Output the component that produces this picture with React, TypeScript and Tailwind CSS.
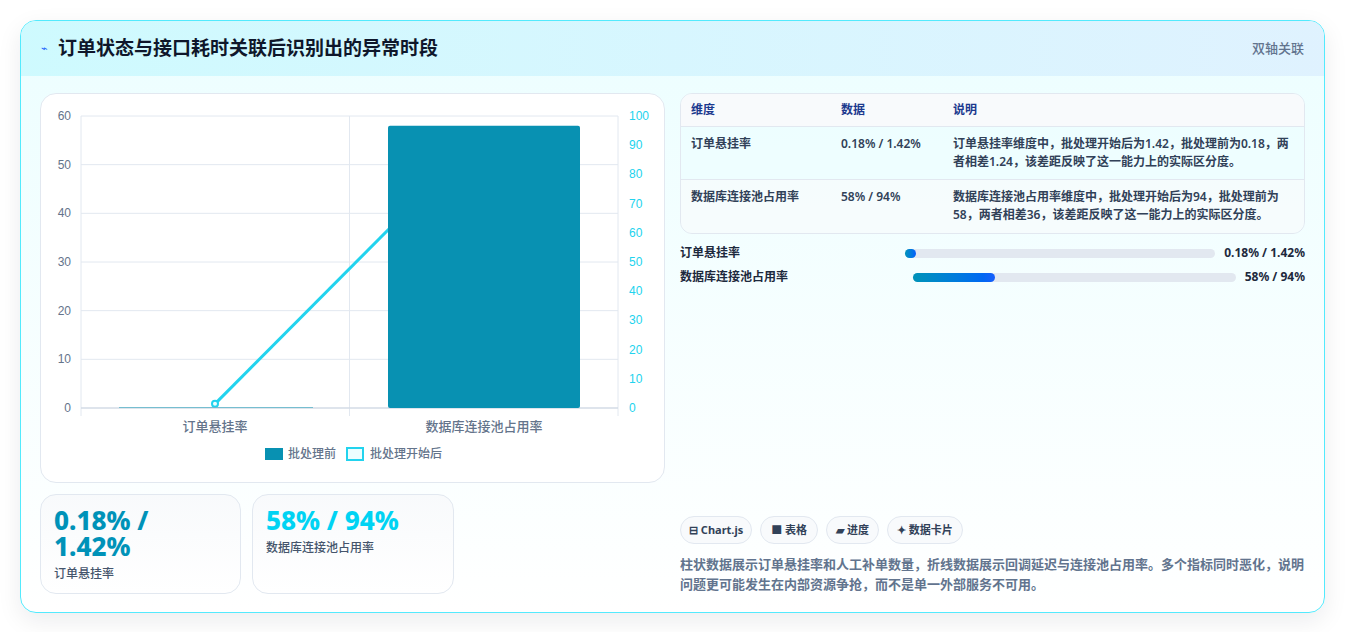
const font = { fontFamily: '"Noto Sans", "Noto Sans CJK SC", sans-serif' };

function Chart() {
  const x0 = 80, x1 = 617, y0 = 115, y1 = 407;
  const h = y1 - y0;
  const left = [0, 10, 20, 30, 40, 50, 60];
  const right = [0, 10, 20, 30, 40, 50, 60, 70, 80, 90, 100];
  const ly = (v: number) => y1 - (v / 60) * h;
  const ry = (v: number) => y1 - (v / 100) * h;
  return (
    <svg width="625" height="388" viewBox="40 93 625 388" className="block">
      {left.map((v) => (
        <g key={v}>
          <line x1={x0} x2={x1} y1={ly(v)} y2={ly(v)} stroke="#e2e8f0" />
          <text x={70} y={ly(v) + 4} textAnchor="end" fontSize="12" fill="#64748b" fontFamily="Liberation Sans, sans-serif">{v}</text>
        </g>
      ))}
      {right.map((v) => (
        <text key={v} x={628} y={ry(v) + 4} fontSize="12" fill="#22d3ee" fontFamily="Liberation Sans, sans-serif">{v}</text>
      ))}
      <line x1={x0} x2={x0} y1={y0} y2={y1 + 8} stroke="#e2e8f0" />
      <line x1={348.5} x2={348.5} y1={y0} y2={y1 + 8} stroke="#e2e8f0" />
      <line x1={x1} x2={x1} y1={y0} y2={y1 + 8} stroke="#e2e8f0" />
      <line x1={x0} x2={x1} y1={y1} y2={y1} stroke="#cbd5e1" />
      <polyline points={`214,${ry(1.42)} 483,${ry(94)}`} fill="none" stroke="#22d3ee" strokeWidth="3" />
      <circle cx={214} cy={ry(1.42)} r="3" fill="#ecfeff" stroke="#22d3ee" strokeWidth="2" />
      <rect x={118} y={ly(0.18)} width={194} height={y1 - ly(0.18)} fill="#67b8cc" />
      <rect x={387} y={ly(58)} width={192} height={y1 - ly(58)} rx="2" fill="#0891b2" />
      <text x={214} y={430} textAnchor="middle" fontSize="13" fontWeight="500" fill="#64748b" style={font}>订单悬挂率</text>
      <text x={483} y={430} textAnchor="middle" fontSize="13" fontWeight="500" fill="#64748b" style={font}>数据库连接池占用率</text>
      <rect x={264} y={447} width={18} height={12} fill="#0891b2" />
      <text x={287} y={457} fontSize="12" fontWeight="500" fill="#64748b" style={font}>批处理前</text>
      <rect x={346} y={447} width={16} height={12} fill="#ecfeff" stroke="#22d3ee" strokeWidth="2" />
      <text x={369} y={457} fontSize="12" fontWeight="500" fill="#64748b" style={font}>批处理开始后</text>
    </svg>
  );
}

export default function App() {
  return (
    <div className="min-h-screen bg-white p-5" style={font}>
      <div className="rounded-2xl border border-cyan-300 bg-gradient-to-b from-cyan-50 to-white overflow-hidden shadow-[0_8px_24px_rgba(15,23,42,0.08)]">
        <div className="flex h-[55px] items-center justify-between bg-gradient-to-r from-cyan-100 to-sky-100 px-5">
          <div className="flex items-center gap-2.5">
            <span className="text-[11px] text-blue-600">⌁</span>
            <h1 className="text-[19px] font-bold text-slate-900">订单状态与接口耗时关联后识别出的异常时段</h1>
          </div>
          <span className="text-[13px] font-medium text-slate-500">双轴关联</span>
        </div>
        <div className="flex gap-[15px] px-[19px] pt-[17px] pb-[18px]">
          <div className="w-[625px] flex flex-col gap-[11px]">
            <div className="rounded-2xl border border-slate-200 bg-white overflow-hidden"><Chart /></div>
            <div className="flex gap-[11px]">
              <div className="w-[201px] h-[100px] rounded-2xl border border-slate-200 bg-gradient-to-b from-slate-50 to-white px-[13px] pt-[12px]">
                <div className="text-[26px] font-extrabold leading-[26px] text-cyan-600">0.18% / 1.42%</div>
                <div className="mt-[6px] text-[12px] font-medium text-slate-600">订单悬挂率</div>
              </div>
              <div className="w-[202px] h-[100px] rounded-2xl border border-slate-200 bg-gradient-to-b from-slate-50 to-white px-[13px] pt-[12px]">
                <div className="text-[26px] font-extrabold leading-[26px] text-cyan-400">58% / 94%</div>
                <div className="mt-[6px] text-[12px] font-medium text-slate-600">数据库连接池占用率</div>
              </div>
            </div>
          </div>
          <div className="flex-1 flex flex-col">
            <div className="rounded-xl border border-slate-200 overflow-hidden text-[12px] text-slate-700 font-semibold">
              <div className="grid grid-cols-[150px_112px_1fr] h-[33px] items-center bg-slate-50 border-b border-slate-200 px-[10px] text-blue-900 font-bold">
                <span>维度</span><span>数据</span><span>说明</span>
              </div>
              <div className="grid grid-cols-[150px_112px_1fr] h-[53px] pt-[8px] bg-cyan-50/60 border-b border-slate-200 px-[10px] pr-[8px] leading-[18px]">
                <span>订单悬挂率</span><span>0.18% / 1.42%</span><span>订单悬挂率维度中，批处理开始后为1.42，批处理前为0.18，两者相差1.24，该差距反映了这一能力上的实际区分度。</span>
              </div>
              <div className="grid grid-cols-[150px_112px_1fr] h-[53px] pt-[8px] bg-slate-50/60 px-[10px] pr-[20px] leading-[18px]">
                <span>数据库连接池占用率</span><span>58% / 94%</span><span>数据库连接池占用率维度中，批处理开始后为94，批处理前为58，两者相差36，该差距反映了这一能力上的实际区分度。</span>
              </div>
            </div>
            <div className="mt-[11px] flex items-center h-[16px] text-[12px] font-semibold text-slate-800">
              <span className="w-[225px]">订单悬挂率</span>
              <div className="flex-1 h-[9px] rounded-full bg-slate-200"><div className="h-full w-[11px] rounded-full bg-gradient-to-r from-cyan-600 to-blue-600" /></div>
              <span className="ml-[9px] font-bold">0.18% / 1.42%</span>
            </div>
            <div className="mt-[8px] flex items-center h-[16px] text-[12px] font-semibold text-slate-800">
              <span className="w-[233px]">数据库连接池占用率</span>
              <div className="flex-1 h-[9px] rounded-full bg-slate-200"><div className="h-full w-[82px] rounded-full bg-gradient-to-r from-cyan-600 to-blue-600" /></div>
              <span className="ml-[9px] font-bold">58% / 94%</span>
            </div>
            <div className="flex-1" />
            <div className="flex gap-[8px] text-[11px] font-bold text-slate-700">
              <span className="h-[28px] flex items-center rounded-full border border-slate-200 bg-slate-50 px-[8px]">⊟ Chart.js</span>
              <span className="h-[28px] flex items-center rounded-full border border-slate-200 bg-slate-50 px-[10px]">■ 表格</span>
              <span className="h-[28px] flex items-center rounded-full border border-slate-200 bg-slate-50 px-[9px]">▰ 进度</span>
              <span className="h-[28px] flex items-center rounded-full border border-slate-200 bg-slate-50 px-[9px]">✦ 数据卡片</span>
            </div>
            <p className="mt-[10px] text-[13px] leading-[20px] font-semibold text-slate-500">柱状数据展示订单悬挂率和人工补单数量，折线数据展示回调延迟与连接池占用率。多个指标同时恶化，说明问题更可能发生在内部资源争抢，而不是单一外部服务不可用。</p>
          </div>
        </div>
      </div>
    </div>
  );
}
